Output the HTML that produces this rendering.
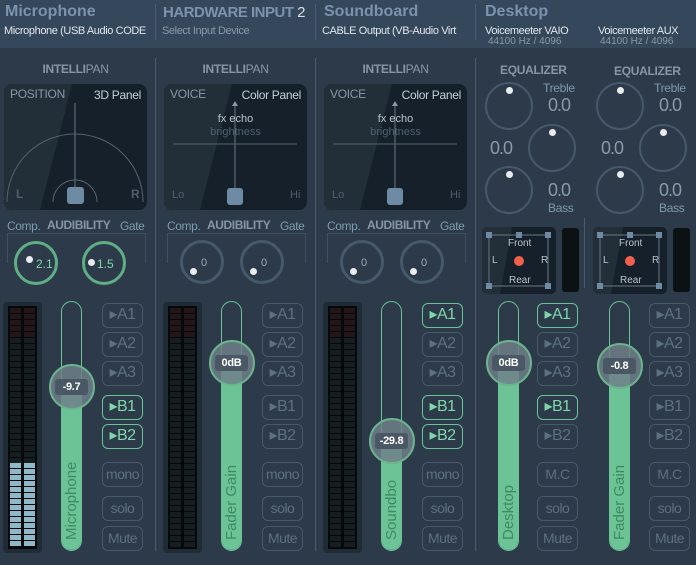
<!DOCTYPE html>
<html><head><meta charset="utf-8"><style>
*{margin:0;padding:0;box-sizing:border-box}
body{width:696px;height:565px;overflow:hidden;background:#2c3a4a;font-family:"Liberation Sans",sans-serif;position:relative}
.a{position:absolute}
.hdr{left:0;top:0;width:696px;height:48px;background:#35475a}
.t1{font-size:16px;font-weight:bold;color:#7b93ad}
.t2{font-size:11px;color:#e0e6ec;white-space:nowrap;letter-spacing:-0.4px}
.vs{width:1px;background:#4a5c6e}
.ip{font-size:12px;font-weight:bold;color:#8796a4;width:143px;text-align:center;letter-spacing:-0.3px}
.ip span{font-weight:normal}
.pan{width:143px;height:126px;border-radius:8px;background:#15202a;overflow:hidden}
.lbl{font-size:12px;color:#8a98a6;letter-spacing:-0.3px}
.lbr{font-size:12px;color:#c8d0d8;right:6px;top:4px;letter-spacing:-0.3px}
.au{font-size:12px;color:#7f9ab0;letter-spacing:-0.4px}
.aub{font-size:12px;font-weight:bold;color:#8796a4;letter-spacing:-0.4px}
.kn{width:44px;height:44px;border-radius:50%;border:3px solid #46596b}
.kg{border-color:#5fae84}
.dot{width:7px;height:7px;border-radius:50%;background:#e8ecef}
.kv{font-size:11px;color:#9aabb9}
.meter{width:39px;height:251px;background:#202c35;border-radius:4px}
.mi{left:5px;top:4px;width:29px;height:243px;background:#06090b}
.col{width:11px;height:239px;top:2px;background:repeating-linear-gradient(to bottom,#161e20 0 5px,#06090b 5px 6px)}
.red{width:11px;height:30px;top:2px;background:repeating-linear-gradient(to bottom,#241616 0 5px,#06090b 5px 6px)}
.blu{width:11px;height:84px;bottom:2px;background:repeating-linear-gradient(to bottom,#8fb8c8 0 5px,#06090b 5px 6px)}
.trk{width:21px;height:250px;border:1.5px solid #6cc395;border-radius:11px;overflow:hidden}
.fill{left:0;width:100%;bottom:0;background:#6cc395}
.fk{width:46px;height:46px;border-radius:50%;background:rgba(110,128,138,.85);border:2.5px solid #6cb48d}
.fl{left:4px;top:13px;width:33px;height:16px;background:#4a5866;border-radius:3px;color:#fff;font-size:11px;font-weight:bold;text-align:center;line-height:16px;letter-spacing:-0.3px}
.vt{font-size:15px;color:#3f8a63;transform:rotate(-90deg);transform-origin:left top;white-space:nowrap}
.b{width:41px;height:25px;border:1.5px solid #46586a;border-radius:6px;color:#5d7081;font-size:16px;text-align:center;line-height:22px;letter-spacing:-0.5px}
.b.s{font-size:14px}
.g{border-color:#6ac49a;color:#7fd6a8}
.eqt{font-size:12px;font-weight:bold;color:#8796a4;letter-spacing:-0.3px}
.ek{width:48px;height:48px;border-radius:50%;border:2.5px solid #46596b}
.ev{font-size:18px;color:#8a9aa8;letter-spacing:-1px}
.eb{font-size:12px;color:#7f9ab0;letter-spacing:-0.3px}
</style></head><body>
<div class="a hdr"></div>
<div class="a t1" style="left:5px;top:3px">Microphone</div>
<div class="a t2" style="left:4px;top:25px">Microphone (USB Audio CODE</div>
<div class="a vs" style="left:155px;top:4px;height:36px"></div>
<div class="a t1" style="left:163px;top:4px;font-size:15px;letter-spacing:-0.5px">HARDWARE INPUT <span style="font-weight:normal;color:#d8dee4">2</span></div>
<div class="a t2" style="left:162px;top:25px;color:#8a9aa8">Select Input Device</div>
<div class="a vs" style="left:315px;top:4px;height:36px"></div>
<div class="a t1" style="left:324px;top:3px">Soundboard</div>
<div class="a t2" style="left:322px;top:25px">CABLE Output (VB-Audio Virt</div>
<div class="a vs" style="left:475px;top:4px;height:36px"></div>
<div class="a t1" style="left:485px;top:3px">Desktop</div>
<div class="a t2" style="left:485px;top:25px">Voicemeeter VAIO</div>
<div class="a t2" style="left:488px;top:36px;color:#8a9aa8;font-size:10px;letter-spacing:0">44100 Hz / 4096</div>
<div class="a t2" style="left:598px;top:25px">Voicemeeter AUX</div>
<div class="a t2" style="left:600px;top:36px;color:#8a9aa8;font-size:10px;letter-spacing:0">44100 Hz / 4096</div>

<div class="a vs" style="left:155px;top:58px;height:493px"></div>
<div class="a vs" style="left:315px;top:58px;height:493px"></div>
<div class="a vs" style="left:475px;top:58px;height:493px"></div>
<div class="a vs" style="left:584px;top:218px;height:70px"></div>

<!-- STRIP 1 -->
<div class="a" style="left:0;top:0">
<div class="a ip" style="left:4px;top:62px">INTELLI<span>PAN</span></div>
<div class="a pan" style="left:4px;top:84px">
<svg class="a" style="left:0;top:0" width="143" height="126"><polygon points="0,0 68,0 36,126 0,126" fill="#222e38"/>
<line x1="71" y1="19" x2="71" y2="108" stroke="#6a7885" stroke-width="1"/>
<path d="M3,118 A68,68 0 0 1 139,118" fill="none" stroke="#55636f"/>
<path d="M49,118 A22,22 0 0 1 93,118" fill="none" stroke="#55636f"/></svg>
<div class="a lbl" style="left:6px;top:3px">POSITION</div><div class="a lbr">3D Panel</div>
<div class="a" style="left:63px;top:103px;width:17px;height:17px;background:#6f8ba3;border-radius:3px"></div>
<div class="a" style="left:12px;top:103px;font-size:12px;font-weight:bold;color:#4f5e6b">L</div>
<div class="a" style="left:127px;top:103px;font-size:12px;font-weight:bold;color:#4f5e6b">R</div>
</div>
<div class="a au" style="left:7px;top:219px">Comp.</div>
<div class="a aub" style="left:47px;top:218px">AUDIBILITY</div>
<div class="a au" style="left:120px;top:219px">Gate</div>
<div class="a" style="left:7px;top:233px;width:139px;height:30px;border:1px solid #3e4f60;border-bottom:none"></div>
<div class="a kn kg" style="left:14px;top:241px;background:#2c3a4a"></div>
<div class="a dot" style="left:26px;top:256px"></div><div class="a kv" style="left:36px;top:257px;color:#7fd6a8;font-size:12px">2.1</div>
<div class="a kn kg" style="left:82px;top:241px;background:#2c3a4a"></div>
<div class="a dot" style="left:88px;top:259px"></div><div class="a kv" style="left:97px;top:257px;color:#7fd6a8;font-size:12px">1.5</div>
<div class="a meter" style="left:3px;top:302px"><div class="a mi"><div class="a col" style="left:2px"></div><div class="a col" style="left:16px"></div><div class="a red" style="left:2px"></div><div class="a red" style="left:16px"></div><div class="a blu" style="left:2px"></div><div class="a blu" style="left:16px"></div></div></div>
<div class="a trk" style="left:61px;top:301px"><div class="a fill" style="height:164px"></div></div>
<div class="a vt" style="left:63px;top:540px">Microphone</div>
<div class="a fk" style="left:49px;top:364px"><div class="a fl">-9.7</div></div>
<div class="a b" style="left:102px;top:303px">&#9656;A1</div>
<div class="a b" style="left:102px;top:332px">&#9656;A2</div>
<div class="a b" style="left:102px;top:361px">&#9656;A3</div>
<div class="a b g" style="left:102px;top:395px">&#9656;B1</div>
<div class="a b g" style="left:102px;top:424px">&#9656;B2</div>
<div class="a b s" style="left:102px;top:462px">mono</div>
<div class="a b s" style="left:102px;top:496px">solo</div>
<div class="a b s" style="left:102px;top:526px">Mute</div>
</div>

<!-- STRIP 2 & 3 -->
<div class="a" style="left:160px;top:0">
<div class="a ip" style="left:4px;top:62px">INTELLI<span>PAN</span></div>
<div class="a pan" style="left:4px;top:84px">
<svg class="a" style="left:0;top:0" width="143" height="126"><polygon points="0,0 68,0 36,126 0,126" fill="#222e38"/>
<line x1="71" y1="19" x2="71" y2="108" stroke="#6a7885"/><path d="M68,22 L71,17 L74,22Z" fill="#8a98a6"/>
<line x1="9" y1="60" x2="133" y2="60" stroke="#55636f"/></svg>
<div class="a lbl" style="left:6px;top:3px">VOICE</div><div class="a lbr">Color Panel</div>
<div class="a" style="left:0;top:29px;width:143px;text-align:center;font-size:11px;color:#b8c4cc">fx echo</div>
<div class="a" style="left:0;top:42px;width:143px;text-align:center;font-size:11px;color:#4f6170">brightness</div>
<div class="a" style="left:63px;top:104px;width:16px;height:17px;background:#6f8ba3;border-radius:3px"></div>
<div class="a" style="left:8px;top:105px;font-size:11px;color:#4f5e6b">Lo</div>
<div class="a" style="left:126px;top:105px;font-size:11px;color:#4f5e6b">Hi</div>
</div>
<div class="a au" style="left:7px;top:219px">Comp.</div>
<div class="a aub" style="left:47px;top:218px">AUDIBILITY</div>
<div class="a au" style="left:120px;top:219px">Gate</div>
<div class="a" style="left:7px;top:233px;width:139px;height:30px;border:1px solid #3e4f60;border-bottom:none"></div>
<div class="a kn" style="left:20px;top:240px;background:#2c3a4a"></div>
<div class="a dot" style="left:30px;top:268px"></div><div class="a kv" style="left:41px;top:257px">0</div>
<div class="a kn" style="left:80px;top:240px;background:#2c3a4a"></div>
<div class="a dot" style="left:90px;top:268px"></div><div class="a kv" style="left:101px;top:257px">0</div>
<div class="a meter" style="left:3px;top:302px"><div class="a mi"><div class="a col" style="left:2px"></div><div class="a col" style="left:16px"></div><div class="a red" style="left:2px"></div><div class="a red" style="left:16px"></div></div></div>
<div class="a trk" style="left:61px;top:301px"><div class="a fill" style="height:188px"></div></div>
<div class="a vt" style="left:63px;top:540px">Fader Gain</div>
<div class="a fk" style="left:49px;top:340px"><div class="a fl">0dB</div></div>
<div class="a b" style="left:102px;top:303px">&#9656;A1</div>
<div class="a b" style="left:102px;top:332px">&#9656;A2</div>
<div class="a b" style="left:102px;top:361px">&#9656;A3</div>
<div class="a b" style="left:102px;top:395px">&#9656;B1</div>
<div class="a b" style="left:102px;top:424px">&#9656;B2</div>
<div class="a b s" style="left:102px;top:462px">mono</div>
<div class="a b s" style="left:102px;top:496px">solo</div>
<div class="a b s" style="left:102px;top:526px">Mute</div>
</div>

<div class="a" style="left:320px;top:0">
<div class="a ip" style="left:4px;top:62px">INTELLI<span>PAN</span></div>
<div class="a pan" style="left:4px;top:84px">
<svg class="a" style="left:0;top:0" width="143" height="126"><polygon points="0,0 68,0 36,126 0,126" fill="#222e38"/>
<line x1="71" y1="19" x2="71" y2="108" stroke="#6a7885"/><path d="M68,22 L71,17 L74,22Z" fill="#8a98a6"/>
<line x1="9" y1="60" x2="133" y2="60" stroke="#55636f"/></svg>
<div class="a lbl" style="left:6px;top:3px">VOICE</div><div class="a lbr">Color Panel</div>
<div class="a" style="left:0;top:29px;width:143px;text-align:center;font-size:11px;color:#b8c4cc">fx echo</div>
<div class="a" style="left:0;top:42px;width:143px;text-align:center;font-size:11px;color:#4f6170">brightness</div>
<div class="a" style="left:63px;top:104px;width:16px;height:17px;background:#6f8ba3;border-radius:3px"></div>
<div class="a" style="left:8px;top:105px;font-size:11px;color:#4f5e6b">Lo</div>
<div class="a" style="left:126px;top:105px;font-size:11px;color:#4f5e6b">Hi</div>
</div>
<div class="a au" style="left:7px;top:219px">Comp.</div>
<div class="a aub" style="left:47px;top:218px">AUDIBILITY</div>
<div class="a au" style="left:120px;top:219px">Gate</div>
<div class="a" style="left:7px;top:233px;width:139px;height:30px;border:1px solid #3e4f60;border-bottom:none"></div>
<div class="a kn" style="left:20px;top:240px;background:#2c3a4a"></div>
<div class="a dot" style="left:30px;top:268px"></div><div class="a kv" style="left:41px;top:257px">0</div>
<div class="a kn" style="left:80px;top:240px;background:#2c3a4a"></div>
<div class="a dot" style="left:90px;top:268px"></div><div class="a kv" style="left:101px;top:257px">0</div>
<div class="a meter" style="left:3px;top:302px"><div class="a mi"><div class="a col" style="left:2px"></div><div class="a col" style="left:16px"></div><div class="a red" style="left:2px"></div><div class="a red" style="left:16px"></div></div></div>
<div class="a trk" style="left:61px;top:301px"><div class="a fill" style="height:110px"></div></div>
<div class="a vt" style="left:63px;top:540px">Soundbo</div>
<div class="a fk" style="left:49px;top:418px"><div class="a fl">-29.8</div></div>
<div class="a b g" style="left:102px;top:303px">&#9656;A1</div>
<div class="a b" style="left:102px;top:332px">&#9656;A2</div>
<div class="a b" style="left:102px;top:361px">&#9656;A3</div>
<div class="a b g" style="left:102px;top:395px">&#9656;B1</div>
<div class="a b g" style="left:102px;top:424px">&#9656;B2</div>
<div class="a b s" style="left:102px;top:462px">mono</div>
<div class="a b s" style="left:102px;top:496px">solo</div>
<div class="a b s" style="left:102px;top:526px">Mute</div>
</div>

<!-- BUS STRIPS -->
<div class="a" style="left:475px;top:0">
<div class="a eqt" style="left:25px;top:63px">EQUALIZER</div>
<div class="a eb" style="left:68px;top:81px">Treble</div>
<div class="a ek" style="left:10px;top:82px"></div><div class="a dot" style="left:31px;top:87px"></div>
<div class="a ev" style="left:73px;top:95px">0.0</div>
<div class="a ev" style="left:15px;top:138px">0.0</div>
<div class="a ek" style="left:53px;top:124px"></div><div class="a dot" style="left:74px;top:129px"></div>
<div class="a ek" style="left:10px;top:166px"></div><div class="a dot" style="left:31px;top:171px"></div>
<div class="a ev" style="left:73px;top:180px">0.0</div>
<div class="a eb" style="left:73px;top:201px">Bass</div>
<div class="a" style="left:7px;top:227px;width:74px;height:67px;background:#15202a;border-radius:5px;overflow:hidden">
<svg class="a" style="left:0;top:0" width="74" height="67"><polygon points="0,0 30,0 18,67 0,67" fill="#222e38"/><rect x="7" y="8" width="59" height="51" fill="none" stroke="#6a7885"/>
<rect x="4" y="5" width="6" height="6" fill="#6f8ba3"/><rect x="34" y="5" width="6" height="6" fill="#6f8ba3"/><rect x="63" y="5" width="6" height="6" fill="#6f8ba3"/><rect x="4" y="56" width="6" height="6" fill="#6f8ba3"/><rect x="63" y="56" width="6" height="6" fill="#6f8ba3"/><circle cx="37" cy="34" r="5" fill="#f0604a"/></svg>
<div class="a" style="left:26px;top:11px;font-size:10px;color:#b8c4cc">Front</div>
<div class="a" style="left:10px;top:28px;font-size:10px;color:#b8c4cc">L</div>
<div class="a" style="left:59px;top:28px;font-size:10px;color:#b8c4cc">R</div>
<div class="a" style="left:27px;top:48px;font-size:10px;color:#b8c4cc">Rear</div></div>
<div class="a" style="left:87px;top:228px;width:17px;height:64px;background:#0c1114;border-radius:3px"></div>
<div class="a trk" style="left:23px;top:301px"><div class="a fill" style="height:188px"></div></div>
<div class="a vt" style="left:25px;top:540px">Desktop</div>
<div class="a fk" style="left:11px;top:340px"><div class="a fl">0dB</div></div>
<div class="a b g" style="left:62px;top:303px">&#9656;A1</div>
<div class="a b" style="left:62px;top:332px">&#9656;A2</div>
<div class="a b" style="left:62px;top:361px">&#9656;A3</div>
<div class="a b g" style="left:62px;top:395px">&#9656;B1</div>
<div class="a b" style="left:62px;top:424px">&#9656;B2</div>
<div class="a b s" style="left:62px;top:462px">M.C</div>
<div class="a b s" style="left:62px;top:496px">solo</div>
<div class="a b s" style="left:62px;top:526px">Mute</div>
</div>

<div class="a" style="left:586px;top:0">
<div class="a eqt" style="left:28px;top:64px">EQUALIZER</div>
<div class="a eb" style="left:68px;top:81px">Treble</div>
<div class="a ek" style="left:10px;top:82px"></div><div class="a dot" style="left:31px;top:87px"></div>
<div class="a ev" style="left:73px;top:95px">0.0</div>
<div class="a ev" style="left:15px;top:138px">0.0</div>
<div class="a ek" style="left:53px;top:124px"></div><div class="a dot" style="left:74px;top:129px"></div>
<div class="a ek" style="left:10px;top:166px"></div><div class="a dot" style="left:31px;top:171px"></div>
<div class="a ev" style="left:73px;top:180px">0.0</div>
<div class="a eb" style="left:73px;top:201px">Bass</div>
<div class="a" style="left:7px;top:227px;width:74px;height:67px;background:#15202a;border-radius:5px;overflow:hidden">
<svg class="a" style="left:0;top:0" width="74" height="67"><polygon points="0,0 30,0 18,67 0,67" fill="#222e38"/><rect x="7" y="8" width="59" height="51" fill="none" stroke="#6a7885"/>
<rect x="4" y="5" width="6" height="6" fill="#6f8ba3"/><rect x="34" y="5" width="6" height="6" fill="#6f8ba3"/><rect x="63" y="5" width="6" height="6" fill="#6f8ba3"/><rect x="4" y="56" width="6" height="6" fill="#6f8ba3"/><rect x="63" y="56" width="6" height="6" fill="#6f8ba3"/><circle cx="37" cy="34" r="5" fill="#f0604a"/></svg>
<div class="a" style="left:26px;top:11px;font-size:10px;color:#b8c4cc">Front</div>
<div class="a" style="left:10px;top:28px;font-size:10px;color:#b8c4cc">L</div>
<div class="a" style="left:59px;top:28px;font-size:10px;color:#b8c4cc">R</div>
<div class="a" style="left:27px;top:48px;font-size:10px;color:#b8c4cc">Rear</div></div>
<div class="a" style="left:87px;top:228px;width:17px;height:64px;background:#0c1114;border-radius:3px"></div>
<div class="a trk" style="left:23px;top:301px"><div class="a fill" style="height:185px"></div></div>
<div class="a vt" style="left:25px;top:540px">Fader Gain</div>
<div class="a fk" style="left:11px;top:343px"><div class="a fl">-0.8</div></div>
<div class="a b" style="left:63px;top:303px">&#9656;A1</div>
<div class="a b" style="left:63px;top:332px">&#9656;A2</div>
<div class="a b" style="left:63px;top:361px">&#9656;A3</div>
<div class="a b" style="left:63px;top:395px">&#9656;B1</div>
<div class="a b" style="left:63px;top:424px">&#9656;B2</div>
<div class="a b s" style="left:63px;top:462px">M.C</div>
<div class="a b s" style="left:63px;top:496px">solo</div>
<div class="a b s" style="left:63px;top:526px">Mute</div>
</div>
</body></html>
